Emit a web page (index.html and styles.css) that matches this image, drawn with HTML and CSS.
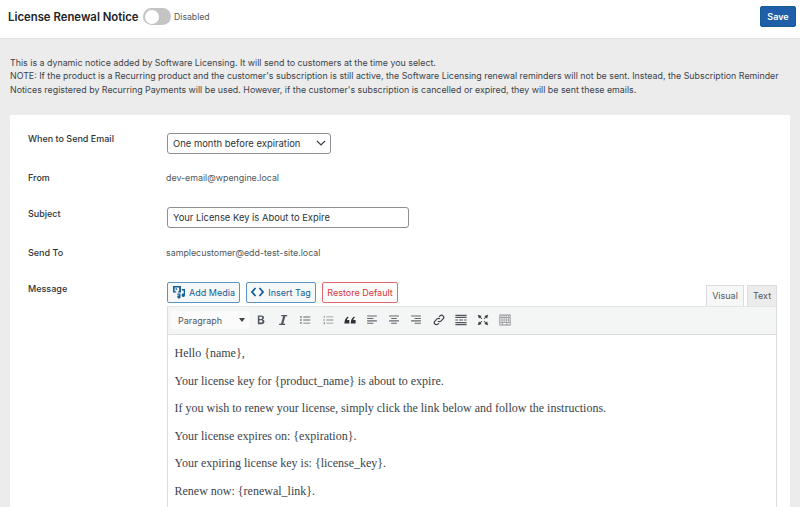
FILE: index.html
```html
<!DOCTYPE html>
<html lang="en">
<head>
<meta charset="utf-8">
<title>License Renewal Notice</title>
<link rel="stylesheet" href="styles.css">
</head>
<body>
<header class="topbar">
  <div class="title-group">
    <h1 class="title">License Renewal Notice</h1>
    <span class="toggle"><span class="knob"></span></span>
    <span class="status">Disabled</span>
  </div>
  <button class="save">Save</button>
</header>
<main class="content">
  <p class="intro">This is a dynamic notice added by Software Licensing. It will send to customers at the time you select.<br>NOTE: If the product is a Recurring product and the customer's subscription is still active, the Software Licensing renewal reminders will not be sent. Instead, the Subscription Reminder Notices registered by Recurring Payments will be used. However, if the customer's subscription is cancelled or expired, they will be sent these emails.</p>
  <section class="card">
    <div class="row row-when">
      <div class="label label-first">When to Send Email</div>
      <div class="select"><span>One month before expiration</span>
        <svg class="chev" width="10" height="6" viewBox="0 0 10 6"><path d="M1 1l4 4 4-4" fill="none" stroke="#3c434a" stroke-width="1.200"/></svg>
      </div>
    </div>
    <div class="row row-from">
      <div class="label">From</div>
      <div class="value">dev-email@wpengine.local</div>
    </div>
    <div class="row row-subject">
      <div class="label">Subject</div>
      <div class="input">Your License Key is About to Expire</div>
    </div>
    <div class="row row-to">
      <div class="label">Send To</div>
      <div class="value">samplecustomer@edd-test-site.local</div>
    </div>
    <div class="row row-message">
      <div class="label">Message</div>
      <div class="editor">
        <div class="editor-top">
          <div class="buttons">
            <span class="btn btn-media">
              <svg width="14" height="14" viewBox="0 0 14 14"><path fill="#135e96" fill-rule="evenodd" d="M1 1h8v6.500H6V6.200h1.200V2.600H2.600v3.600h1.600v1.300H1zM3.500 3.200h1.600v1.600H3.500z"/><path fill="#135e96" d="M9.800 4H13v6.300a1.700 1.700 0 1 1-1.300-1.600V5.400H9.800zM5.300 8.500h3.200v3.400a1.600 1.600 0 1 1-1.300-1.500v-.6H5.300z"/></svg>
              Add Media</span>
            <span class="btn btn-tag">
              <svg width="13" height="10" viewBox="0 0 13 10"><path d="M4.500 1L1 5l3.500 4M8.500 1L12 5 8.500 9" fill="none" stroke="#135e96" stroke-width="1.800"/></svg>
              <span class="btn-gap">Insert Tag</span></span>
            <span class="btn btn-red">Restore Default</span>
          </div>
          <div class="tabs">
            <span class="tab tab-active">Visual</span>
            <span class="tab">Text</span>
          </div>
        </div>
        <div class="toolbar">
          <div class="format"><span>Paragraph</span><i class="caret"></i></div>
          <svg class="ti" viewBox="0 0 20 20"><path d="M5.500 3.500h5c2.500 0 3.800 1.200 3.800 3.100 0 1.200-.6 2.100-1.700 2.600 1.500.4 2.300 1.500 2.300 2.900 0 2.300-1.600 3.900-4.100 3.900H5.500zm2.200 2v2.900h2.400c1 0 1.700-.6 1.700-1.500s-.7-1.400-1.700-1.400zm0 4.800v3.400h2.600c1.100 0 1.800-.7 1.800-1.700s-.7-1.700-1.800-1.700z" fill="#50575e"/></svg>
          <svg class="ti" viewBox="0 0 20 20"><path d="M7.500 3H16v1.800h-2.600L10.400 15.200H13V17H4.500v-1.800h2.700L10.200 4.800H7.500z" fill="#50575e"/></svg>
          <svg class="ti" viewBox="0 0 20 20"><path d="M3 4.500h2.200v2.200H3zm0 4.400h2.200v2.200H3zm0 4.400h2.200v2.200H3zM7.500 5h10v1.300h-10zm0 4.400h10v1.300h-10zm0 4.400h10v1.300h-10z" fill="#646970"/></svg>
          <svg class="ti" viewBox="0 0 20 20"><path d="M7.500 5h10v1.200h-10zm0 4.400h10v1.200h-10zm0 4.400h10v1.200h-10zM4 4h1.200v3.200H4zM3.400 8.800h2.200v.8H4.400v.7h1.200v.8H3.400zm0 4h2.200v3.400H3.400v-.8h1.200v-.5H3.800v-.7h.8v-.6H3.400z" fill="#8c8f94"/></svg>
          <svg class="ti" viewBox="0 0 20 20"><path d="M2 15c0-4.500 1.700-8 5-10l1 1.500C6.500 7.700 5.900 8.800 5.700 10h3.300v5H2zm9 0c0-4.500 1.700-8 5-10l1 1.500c-1.500 1.200-2.100 2.300-2.300 3.500H18v5h-7z" fill="#2c3338"/></svg>
          <svg class="ti" viewBox="0 0 20 20"><path d="M3 3.500h14V5H3zm0 3.500h9v1.500H3zm0 3.500h14V12H3zM3 14h9v1.500H3z" fill="#646970"/></svg>
          <svg class="ti" viewBox="0 0 20 20"><path d="M3 3.500h14V5H3zM6 7h8v1.500H6zm-3 3.500h14V12H3zM6 14h8v1.500H6z" fill="#646970"/></svg>
          <svg class="ti" viewBox="0 0 20 20"><path d="M3 3.500h14V5H3zM8 7h9v1.500H8zm-5 3.500h14V12H3zM8 14h9v1.500H8z" fill="#646970"/></svg>
          <svg class="ti" viewBox="0 0 20 20"><path d="M8.500 11.500a3 3 0 0 0 4.300 0l3-3a3 3 0 0 0-4.300-4.300l-1.300 1.300M11.500 8.500a3 3 0 0 0-4.300 0l-3 3a3 3 0 0 0 4.300 4.300l1.300-1.300" fill="none" stroke="#3c434a" stroke-width="1.700"/></svg>
          <svg class="ti" viewBox="0 0 20 20"><path d="M2 2.500h16v1.800H2zM2 5.500h16V7H2zM2 13h16v1.500H2zM2 15.700h16v1.800H2zM2 9.300h3.500v1.400H2zm5 0h6v1.400H7zm7.500 0H18v1.400h-3.500z" fill="#50575e"/></svg>
          <svg class="ti" viewBox="0 0 20 20"><path d="M3 3l4.500 1.500L6.200 5.800 8.500 8 8 8.500 5.800 6.200 4.500 7.500zm14 0l-1.500 4.500-1.300-1.300L12 8.500l-.5-.5 2.300-2.200-1.300-1.300zM3 17l1.500-4.500 1.300 1.300L8 11.500l.5.500-2.300 2.200 1.300 1.300zm14 0l-4.500-1.500 1.300-1.300L11.500 12l.5-.5 2.200 2.300 1.300-1.300z" fill="#2c3338" stroke="#2c3338" stroke-width=".6"/></svg>
          <svg class="ti" viewBox="0 0 20 20"><path fill-rule="evenodd" d="M2 2h16v16H2zm1.200 1.500V6h2V3.500zm3 0V6h2V3.500zm3 0V6h2V3.500zm3 0V6h2V3.500zm3 0V6h1.600V3.500zM3.200 7v2.500h2V7zm3 0v2.500h2V7zm3 0v2.500h2V7zm3 0v2.500h2V7zm3 0v2.500h1.600V7zM3.200 10.500V13h2v-2.500zm3 0V13h2v-2.500zm3 0V13h2v-2.500zm3 0V13h2v-2.500zm3 0V13h1.600v-2.500zM3.200 14v2.500h3V14zm4 0v2.500h5V14zm6 0v2.500h3.600V14z" fill="#8c8f94"/></svg>
        </div>
        <div class="body">
          <p>Hello {name},</p>
          <p>Your license key for {product_name} is about to expire.</p>
          <p>If you wish to renew your license, simply click the link below and follow the instructions.</p>
          <p>Your license expires on: {expiration}.</p>
          <p>Your expiring license key is: {license_key}.</p>
          <p>Renew now: {renewal_link}.</p>
        </div>
      </div>
    </div>
  </section>
</main>
</body>
</html>
```
FILE: styles.css
```css
* { box-sizing: border-box; }
html, body { margin: 0; padding: 0; height: 507px; overflow: hidden; }
body { font-family: Inter, "Liberation Sans", sans-serif; background: #ececec; color: #3c434a; }
.topbar { height: 39px; background: #fff; border-bottom: 1px solid #e2e2e2; display: flex; align-items: center; justify-content: space-between; padding: 0 4px 5px 8px; }
.title-group { display: flex; align-items: center; }
.title { margin: 0; font-size: 11.350px; font-weight: 600; color: #1d2327; }
.toggle { width: 28px; height: 17px; margin-left: 4.500px; border-radius: 9px; background: #c4c4c4; position: relative; display: block; }
.knob { position: absolute; left: 1.500px; top: 1.500px; width: 14px; height: 14px; border-radius: 50%; background: #fff; }
.status { margin-left: 3px; font-size: 8.700px; color: #50575e; }
.save { width: 36px; height: 21px; padding: 0; border: 1px solid #135e96; border-radius: 2px; background: #1f5ea8; color: #fff; font: 600 9px Inter, "Liberation Sans", sans-serif; }
.content { padding: 0 10px; }
.intro { margin: 17px 0 19px; font-size: 8.850px; line-height: 13.300px; color: #3c434a; }
.card { background: #fff; padding: 18px 14px 0 18px; height: 400px; }
.row { display: flex; }
.label { width: 139px; flex: none; font-size: 9px; font-weight: 500; color: #2c3338; padding-top: 1px; line-height: 12px; }
.label-first { padding-top: 0; }
.value { font-size: 8.850px; color: #50575e; line-height: 12px; padding-top: 1px; margin-left: -1px; }
.row-when { height: 38px; }
.row-from { height: 36px; }
.row-subject { height: 39px; }
.row-to { height: 36px; }
.select { width: 164px; height: 21px; border: 1px solid #8c8f94; border-radius: 3px; display: flex; align-items: center; justify-content: space-between; padding: 0 4px 0 5px; font-size: 9.450px; color: #2c3338; }
.input { width: 242px; height: 21px; border: 1px solid #8c8f94; border-radius: 3px; display: flex; align-items: center; padding: 0 5px; font-size: 9.400px; color: #2c3338; }
.editor { flex: none; width: 610px; }
.editor-top { display: flex; justify-content: space-between; height: 24px; }
.buttons { display: flex; gap: 6px; }
.btn { height: 21px; border: 1px solid #5b93c4; border-radius: 2px; background: #f6f7f7; display: flex; align-items: center; justify-content: center; gap: 3px; font-size: 9px; color: #135e96; }
.btn-media { width: 73px; }
.btn-tag { width: 70px; }
.btn-gap { margin-left: 1px; }
.btn-red { width: 76px; border-color: #e0686a; color: #d63638; background: #fcfcfc; }
.tabs { display: flex; gap: 3px; align-items: flex-end; margin-top: 3px; }
.tab { height: 21px; width: 30px; display: flex; align-items: center; justify-content: center; background: #ececec; border: 1px solid #dcdcde; border-bottom: 0; font-size: 9px; color: #50575e; }
.tab-active { width: 38px; background: #f6f7f7; }
.toolbar { height: 29px; background: #f4f5f5; border: 1px solid #dcdcde; border-top-color: #e2e4e7; display: flex; align-items: center; padding: 0 3px; }
.format { width: 78px; height: 18px; background: #fbfbfb; border-radius: 2px; display: flex; align-items: center; justify-content: space-between; padding: 0 4px 0 7px; font-size: 9px; color: #50575e; margin-right: 1px; flex: none; }
.caret { width: 0; height: 0; border: 3px solid transparent; border-top: 4px solid #3c434a; border-bottom: 0; }
.ti { width: 14px; height: 14px; margin: 0 4.100px; flex: none; }
.body { border-left: 1px solid #dcdcde; border-right: 1px solid #dcdcde; padding: 11.500px 7px 0 6.500px; height: 180px; font-family: "Liberation Serif", serif; font-size: 12px; color: #3c434a; background: #fff; }
.body p { margin: 0 0 13px; line-height: 14.500px; }
```
